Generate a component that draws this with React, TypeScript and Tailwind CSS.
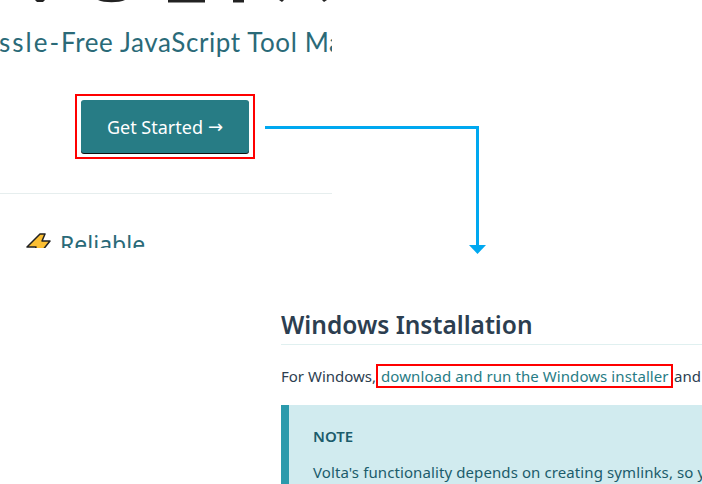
export default function App() {
  return (
    <div className="relative h-[484px] w-[702px] overflow-hidden bg-white font-['Noto_Sans',sans-serif]">
      {/* top crop: landing page */}
      <section className="h-[248px] w-[332px] overflow-hidden">
        <svg width="332" height="4" viewBox="0 0 332 4" className="block" fill="#222">
          <path d="M35 0h10l-2 2h-6z" />
          <path d="M98 0h27c-6 3-21 3-27 0z" />
          <rect x="168" width="37" height="2.500" />
          <rect x="233" width="11" height="2.500" />
          <path d="M279 0h5l-2 2z" />
          <path d="M322 0h5l-3 2z" />
        </svg>
        <div className="ml-[-87px] mt-[23px] whitespace-nowrap font-['Lato',sans-serif] text-[26px] leading-[30px] tracking-[0.6px] text-[#2a6a78]">
          The Ha<span className="tracking-[2px]">ssle-</span>Free JavaScript Tool Manager
        </div>
        <div className="ml-[75px] mt-[37px] w-[180px] border-2 border-[#ff0000] p-1">
          <a className="flex h-[53px] items-center justify-center gap-[5px] rounded-[3px] bg-[#277c85] text-lg text-white shadow-[0_1px_0_#111]">
            Get Started
            <span className="font-['DejaVu_Sans',sans-serif] text-[18px]">→</span>
          </a>
        </div>
        <div className="mt-[34px] h-px bg-[#e6eeee]" />
        <div className="ml-[26px] mt-[35px] flex items-start gap-[9px]">
          <svg width="25" height="19" viewBox="0 0 25 19" className="mt-[4px] shrink-0">
            <path
              d="M14 1 1 14h9l-1 4h7l8-10h-8l3-7z"
              fill="#fbbf34"
              stroke="#222"
              strokeWidth="1.500"
              strokeLinejoin="round"
            />
          </svg>
          <span className="text-[23px] leading-[30px] text-[#2a6a78]">Reliable</span>
        </div>
      </section>

      {/* bottom crop: docs page */}
      <section className="ml-[281px] mt-[61px] text-[#2c3e50]">
        <h2 className="border-b border-[#e0f0f0] pb-[3px] text-[24.500px] font-semibold leading-[32px]">
          Windows Installation
        </h2>
        <p className="mt-[19px] whitespace-nowrap text-[15px] leading-[24px]">
          For Windows,
          <a className="mr-[1px] inline-block w-[297px] border-2 border-[#ff0000] pl-[3px] leading-[20px] tracking-[0.08px] text-[#277c85]">
            download and run the Windows installer
          </a>
          and
        </p>
        <div className="mt-[17px] border-l-[8px] border-[#2b9aac] bg-[#d1ebef] pl-6 pt-[19px] text-[#1b5c6b]">
          <div className="text-[15px] font-semibold leading-[24px]">NOTE</div>
          <p className="mt-3 whitespace-nowrap text-[15px] leading-[24px] tracking-[0.1px]">
            Volta's functionality depends on creating symlinks, so you must either
          </p>
        </div>
      </section>

      {/* annotation arrow */}
      <svg className="absolute left-0 top-0" width="702" height="484" fill="none">
        <path d="M265 127.500H477.500V245" stroke="#00a8f0" strokeWidth="3" />
        <path d="M469 245h17l-8.500 9z" fill="#00a8f0" />
      </svg>
    </div>
  );
}
